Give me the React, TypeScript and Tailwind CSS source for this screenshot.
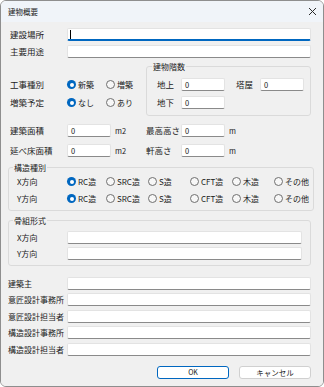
import React from "react";

function Radio({ label, checked }: { label: string; checked?: boolean }) {
  return (
    <div className="flex items-center gap-[2px] leading-none whitespace-nowrap">
      {checked ? (
        <span className="w-[9px] h-[9px] rounded-full bg-[#0067c0] flex items-center justify-center shrink-0">
          <span className="w-[4px] h-[4px] rounded-full bg-white" />
        </span>
      ) : (
        <span className="w-[9px] h-[9px] rounded-full border border-[#6f6f6f] bg-[#f7f7f7] shrink-0" />
      )}
      <span className="text-[8px]">{label}</span>
    </div>
  );
}

function Field({ value, className = "" }: { value?: string; className?: string }) {
  return (
    <div
      className={`h-[13px] bg-white border border-[#e3e3e3] border-b-[#8a8a8a] rounded-[2px] flex items-center pl-[3px] text-[7.5px] leading-none ${className}`}
    >
      {value}
    </div>
  );
}

const structs = ["RC造", "SRC造", "S造", "CFT造", "木造", "その他"];
const colW = ["w-[39px]", "w-[42px]", "w-[42px]", "w-[42px]", "w-[42px]", "flex-1"];

export default function App() {
  return (
    <div className="w-[324px] h-[387px] bg-white font-['Noto_Sans_CJK_JP','Noto_Sans',sans-serif] text-[#1b1b1b] whitespace-nowrap">
      <div className="w-[324px] h-[387px] border border-[#8e8e8e] rounded-[6px] overflow-hidden flex flex-col">
        {/* Title bar */}
        <div className="h-[21px] bg-[#f0f4f9] flex items-center justify-between pl-[7px] pr-[5px]">
          <span className="text-[7.5px] leading-none">建物概要</span>
          <svg width="9" height="9" viewBox="0 0 9 9" className="mr-[1px]">
            <path d="M1 1 L8 8 M8 1 L1 8" stroke="#2b2b2b" strokeWidth="1" />
          </svg>
        </div>

        {/* Body */}
        <div className="flex-1 bg-[#f0f0f0] pl-[9px] pr-[12px] flex flex-col text-[8.5px] leading-none">
          {/* Location / use */}
          <div className="mt-[6px] flex flex-col gap-[4px]">
            <div className="flex items-center">
              <span className="w-[57px]">建設場所</span>
              <div className="flex-1 h-[13px] bg-white border border-[#e3e3e3] border-b-2 border-b-[#0067c0] rounded-[2px] flex items-center pl-[2px]">
                <span className="w-px h-[9px] bg-black" />
              </div>
            </div>
            <div className="flex items-center">
              <span className="w-[57px]">主要用途</span>
              <Field className="flex-1" />
            </div>
          </div>

          {/* Construction type + floors */}
          <div className="mt-[4px] flex">
            <div className="w-[136px] pt-[16px] flex flex-col gap-[5px]">
              <div className="h-[13px] flex items-center">
                <span className="w-[57px]">工事種別</span>
                <div className="w-[39px]"><Radio label="新築" checked /></div>
                <Radio label="増築" />
              </div>
              <div className="h-[13px] flex items-center">
                <span className="w-[57px]">増築予定</span>
                <div className="w-[39px]"><Radio label="なし" checked /></div>
                <Radio label="あり" />
              </div>
            </div>
            <fieldset className="flex-1 border border-[#dadada] rounded-[3px]">
              <legend className="ml-[5px] px-[1px] text-[8px] h-[9px] leading-[9px]">建物階数</legend>
              <div className="pl-[10px] pr-[6px] pt-[7px] pb-[6px] flex flex-col gap-[5px]">
                <div className="h-[13px] flex items-center">
                  <span className="w-[24px]">地上</span>
                  <Field value="0" className="w-[44px]" />
                  <span className="w-[24px] ml-[11px]">塔屋</span>
                  <Field value="0" className="w-[44px]" />
                </div>
                <div className="h-[13px] flex items-center">
                  <span className="w-[24px]">地下</span>
                  <Field value="0" className="w-[44px]" />
                </div>
              </div>
            </fieldset>
          </div>

          {/* Areas / heights */}
          <div className="mt-[8px] flex flex-col gap-[7px]">
            <div className="h-[13px] flex items-center">
              <span className="w-[57px]">建築面積</span>
              <Field value="0" className="w-[44px]" />
              <span className="w-[35px] pl-[4px] text-[7.5px]">m2</span>
              <span className="w-[35px]">最高高さ</span>
              <Field value="0" className="w-[44px]" />
              <span className="pl-[4px] text-[7.5px]">m</span>
            </div>
            <div className="h-[13px] flex items-center">
              <span className="w-[57px]">延べ床面積</span>
              <Field value="0" className="w-[44px]" />
              <span className="w-[35px] pl-[4px] text-[7.5px]">m2</span>
              <span className="w-[35px]">軒高さ</span>
              <Field value="0" className="w-[44px]" />
              <span className="pl-[4px] text-[7.5px]">m</span>
            </div>
          </div>

          {/* Structure type */}
          <fieldset className="mt-[6px] -ml-[2px] border border-[#dadada] rounded-[3px]">
            <legend className="ml-[4px] px-[1px] text-[8px] h-[9px] leading-[9px]">構造種別</legend>
            <div className="pl-[8px] pr-[4px] pt-[3px] pb-[5px] flex flex-col gap-[4px]">
              {["X方向", "Y方向"].map((dir) => (
                <div key={dir} className="h-[13px] flex items-center">
                  <span className="w-[50px] text-[8px]">{dir}</span>
                  {structs.map((s, i) => (
                    <div key={s} className={colW[i]}>
                      <Radio label={s} checked={i === 0} />
                    </div>
                  ))}
                </div>
              ))}
            </div>
          </fieldset>

          {/* Frame type */}
          <fieldset className="mt-[5px] -ml-[2px] border border-[#dadada] rounded-[3px]">
            <legend className="ml-[4px] px-[1px] text-[8px] h-[9px] leading-[9px]">骨組形式</legend>
            <div className="pl-[8px] pr-[8px] pt-[6px] pb-[5px] flex flex-col gap-[3px]">
              {["X方向", "Y方向"].map((dir) => (
                <div key={dir} className="h-[13px] flex items-center">
                  <span className="w-[50px] text-[8px]">{dir}</span>
                  <Field className="flex-1" />
                </div>
              ))}
            </div>
          </fieldset>

          {/* Parties */}
          <div className="mt-[11px] flex flex-col text-[8px]">
            <div className="h-[13px] flex items-center">
              <span className="w-[59px] -ml-[2px]">建築主</span>
              <Field className="flex-1" />
            </div>
            <div className="mt-[3px] h-[13px] flex items-center">
              <span className="w-[59px] -ml-[2px]">意匠設計事務所</span>
              <Field className="flex-1" />
            </div>
            <div className="mt-[4px] h-[13px] flex items-center">
              <span className="w-[59px] -ml-[2px]">意匠設計担当者</span>
              <Field className="flex-1" />
            </div>
            <div className="mt-[3px] h-[13px] flex items-center">
              <span className="w-[59px] -ml-[2px]">構造設計事務所</span>
              <Field className="flex-1" />
            </div>
            <div className="mt-[4px] h-[13px] flex items-center">
              <span className="w-[59px] -ml-[2px]">構造設計担当者</span>
              <Field className="flex-1" />
            </div>
          </div>

          {/* Buttons */}
          <div className="mt-[10px] flex justify-end gap-[10px]">
            <button className="w-[72px] h-[13px] bg-white border border-[#0067c0] rounded-[3px] text-[7px] leading-none flex items-center justify-center">
              OK
            </button>
            <button className="w-[72px] h-[13px] bg-white border border-[#d0d0d0] rounded-[3px] text-[7.5px] leading-none flex items-center justify-center">
              キャンセル
            </button>
          </div>
        </div>
      </div>
    </div>
  );
}
